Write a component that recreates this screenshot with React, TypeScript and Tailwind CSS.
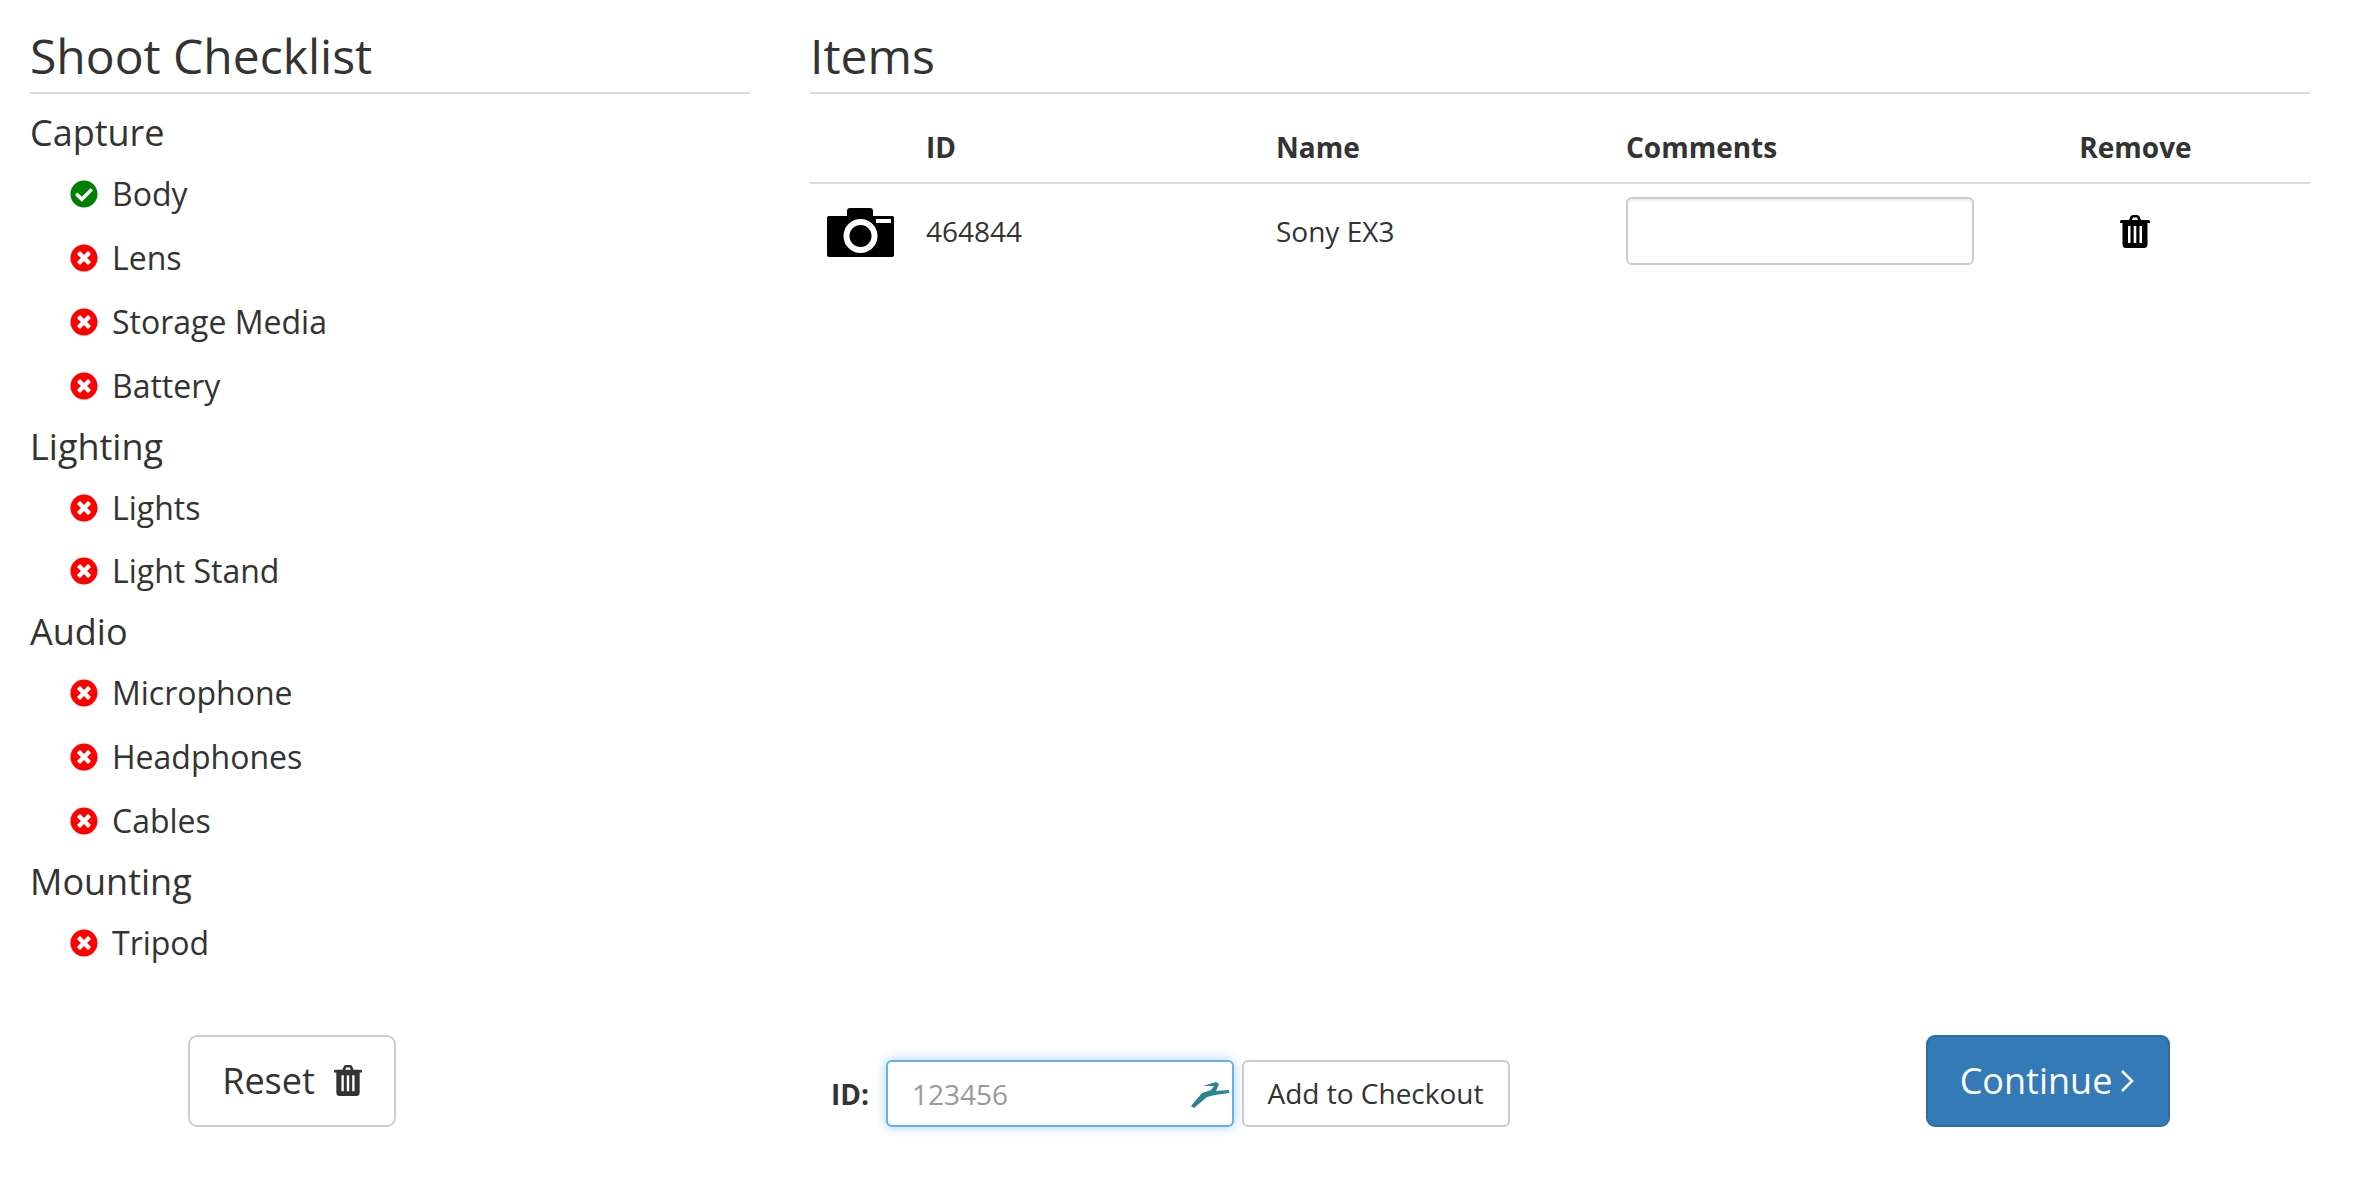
import React from 'react';
import { FaCheckCircle, FaTimesCircle } from 'react-icons/fa';

const sections = [
  { title: 'Capture', items: [['Body', true], ['Lens', false], ['Storage Media', false], ['Battery', false]] },
  { title: 'Lighting', items: [['Lights', false], ['Light Stand', false]] },
  { title: 'Audio', items: [['Microphone', false], ['Headphones', false], ['Cables', false]] },
  { title: 'Mounting', items: [['Tripod', false]] },
] as { title: string; items: [string, boolean][] }[];

function Trash({ className }: { className?: string }) {
  return (
    <svg viewBox="0 0 30 33" className={className} fill="currentColor">
      <path fillRule="evenodd" d="M9 5 L10.5 1.5 Q11 0 13 0 H17 Q19 0 19.5 1.5 L21 5 H28.5 Q30 5 30 6.5 V8 H27.5 V29 Q27.5 33 24 33 H6 Q2.5 33 2.5 29 V8 H0 V6.5 Q0 5 1.500 5 Z M12 5 H18 L17 2.6 H13 Z M8 11 V28 H10.500 V11 Z M13.700 11 V28 H16.300 V11 Z M19.500 11 V28 H22 V11 Z" />
    </svg>
  );
}

function Camera({ className }: { className?: string }) {
  return (
    <svg viewBox="0 0 67 49" className={className}>
      <path d="M1.500 8 H20 V3 Q20 0 23 0 H43 Q46 0 46 3 V8 H65.500 Q67 8 67 9.500 V47 Q67 49 65 49 H2 Q0 49 0 47 V9.500 Q0 8 1.500 8 Z" fill="#000" />
      <rect x="49" y="11" width="15" height="4" fill="#fff" />
      <circle cx="33.500" cy="28" r="14" fill="none" stroke="#fff" strokeWidth="6" />
    </svg>
  );
}

function Antelope({ className }: { className?: string }) {
  return (
    <svg viewBox="0 0 38 26" className={className}>
      <path d="M0 24 L11 11 L20 8 L23 4 L12 4 L25 0 L28 2 L25 9 L38 8 V11 L24 13 L16 15 L3 26 Z" fill="#2a8493" />
    </svg>
  );
}

export default function App() {
  return (
    <div className="flex h-[1194px] w-full gap-[60px] bg-white px-[30px] pr-[44px] font-['Open_Sans',sans-serif] text-[#333]">
      {/* checklist */}
      <div className="flex w-[720px] shrink-0 flex-col">
        <h2 className="mt-[28px] border-b-2 border-[#ddd] pb-[8px] text-[48px] leading-[56px]">Shoot Checklist</h2>
        <div className="mt-[10px]">
          {sections.map((section) => (
            <div key={section.title}>
              <h3 className="h-[58px] text-[36px] leading-[58px]">{section.title}</h3>
              {section.items.map(([label, ok]) => (
                <div key={label} className="flex h-[63.9px] items-center pl-[40px] text-[32px]">
                  {ok ? (
                    <FaCheckCircle className="h-[28px] w-[28px] text-[#008000]" />
                  ) : (
                    <FaTimesCircle className="h-[28px] w-[28px] text-[#ff0000]" />
                  )}
                  <span className="ml-[14px]">{label}</span>
                </div>
              ))}
            </div>
          ))}
        </div>
        <div className="mt-[60px] flex justify-center pr-[196px]">
          <button className="flex h-[92px] w-[208px] items-center justify-center gap-[19px] rounded-[9px] border-2 border-[#ccc] bg-white text-[36px]">
            Reset <Trash className="h-[31px] w-[28px]" />
          </button>
        </div>
      </div>

      {/* items */}
      <div className="flex min-w-0 flex-1 flex-col">
        <h2 className="mt-[28px] border-b-2 border-[#ddd] pb-[8px] text-[48px] leading-[56px]">Items</h2>
        <div className="grid h-[90px] grid-cols-[116px_350px_350px_350px_1fr] items-center border-b-2 border-[#ddd] pt-[17px] text-[28px] font-bold">
          <div />
          <div>ID</div>
          <div>Name</div>
          <div>Comments</div>
          <div className="pr-[15px] text-center">Remove</div>
        </div>
        <div className="grid h-[94px] grid-cols-[116px_350px_350px_350px_1fr] items-center text-[28px]">
          <div className="pt-[3px] pl-[17px]"><Camera className="h-[49px] w-[67px]" /></div>
          <div>464844</div>
          <div>Sony EX3</div>
          <div><input className="h-[68px] w-[348px] rounded-[6px] border-2 border-[#ccc] bg-white shadow-[inset_0_2px_2px_rgba(0,0,0,0.08)]" /></div>
          <div className="flex justify-center pr-[17px] text-black"><Trash className="h-[33px] w-[30px]" /></div>
        </div>
        <div className="mt-auto mb-[67px] flex items-end">
          <div className="flex items-center">
            <label className="ml-[21px] w-[55px] text-[28px] font-bold">ID:</label>
            <div className="relative">
              <input placeholder="123456" className="h-[67px] w-[348px] rounded-[6px] border-2 border-[#66afe9] bg-white pl-[24px] text-[28px] shadow-[0_0_12px_rgba(102,175,233,0.6)] outline-none placeholder:text-[#999]" />
              <Antelope className="absolute top-[22px] right-[5px] h-[26px] w-[38px]" />
            </div>
            <button className="ml-[8px] h-[67px] w-[268px] rounded-[6px] border-2 border-[#ccc] bg-white pr-[1px] pb-[2px] text-[28px]">Add to Checkout</button>
          </div>
          <button className="mr-[140px] ml-auto flex h-[92px] w-[244px] items-center justify-center gap-[8px] rounded-[9px] border-2 border-[#2e6da4] bg-[#337ab7] pr-[2px] text-[36px] text-white">
            Continue
            <svg viewBox="0 0 14 24" className="h-[24px] w-[14px]" fill="none" stroke="currentColor" strokeWidth="2.5">
              <polyline points="2,2 12,12 2,22" />
            </svg>
          </button>
        </div>
      </div>
    </div>
  );
}
